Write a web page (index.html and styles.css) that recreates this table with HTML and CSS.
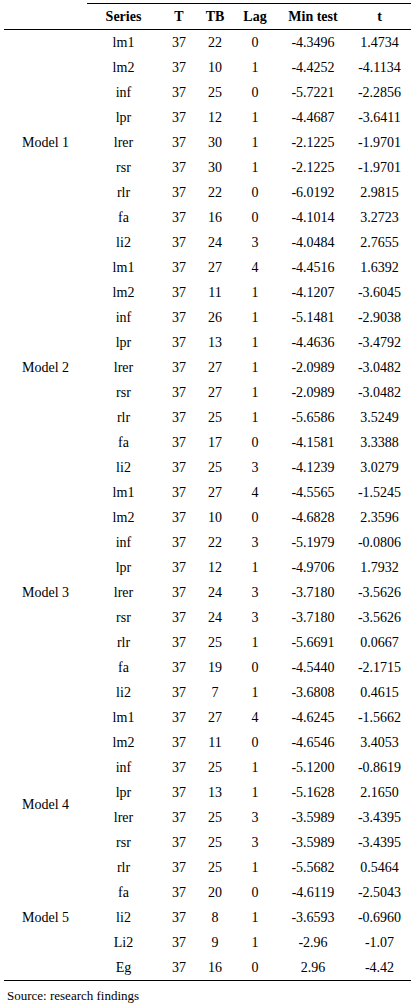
FILE: index.html
```html
<!DOCTYPE html>
<html>
<head>
<meta charset="utf-8">
<link rel="stylesheet" href="styles.css">
</head>
<body>
<div class="page">
<table class="tbl">
<colgroup>
<col class="c-model"><col class="c-series"><col class="c-t"><col class="c-tb"><col class="c-lag"><col class="c-min"><col class="c-tt">
</colgroup>
<thead>
<tr class="head">
<th class="blank"></th><th>Series</th><th>T</th><th>TB</th><th>Lag</th><th>Min test</th><th>t</th>
</tr>
</thead>
<tbody>
<tr><td class="model" rowspan="9">Model 1</td><td>lm1</td><td>37</td><td>22</td><td>0</td><td>-4.3496</td><td>1.4734</td></tr>
<tr><td>lm2</td><td>37</td><td>10</td><td>1</td><td>-4.4252</td><td>-4.1134</td></tr>
<tr><td>inf</td><td>37</td><td>25</td><td>0</td><td>-5.7221</td><td>-2.2856</td></tr>
<tr><td>lpr</td><td>37</td><td>12</td><td>1</td><td>-4.4687</td><td>-3.6411</td></tr>
<tr><td>lrer</td><td>37</td><td>30</td><td>1</td><td>-2.1225</td><td>-1.9701</td></tr>
<tr><td>rsr</td><td>37</td><td>30</td><td>1</td><td>-2.1225</td><td>-1.9701</td></tr>
<tr><td>rlr</td><td>37</td><td>22</td><td>0</td><td>-6.0192</td><td>2.9815</td></tr>
<tr><td>fa</td><td>37</td><td>16</td><td>0</td><td>-4.1014</td><td>3.2723</td></tr>
<tr><td>li2</td><td>37</td><td>24</td><td>3</td><td>-4.0484</td><td>2.7655</td></tr>

<tr><td class="model" rowspan="9">Model 2</td><td>lm1</td><td>37</td><td>27</td><td>4</td><td>-4.4516</td><td>1.6392</td></tr>
<tr><td>lm2</td><td>37</td><td>11</td><td>1</td><td>-4.1207</td><td>-3.6045</td></tr>
<tr><td>inf</td><td>37</td><td>26</td><td>1</td><td>-5.1481</td><td>-2.9038</td></tr>
<tr><td>lpr</td><td>37</td><td>13</td><td>1</td><td>-4.4636</td><td>-3.4792</td></tr>
<tr><td>lrer</td><td>37</td><td>27</td><td>1</td><td>-2.0989</td><td>-3.0482</td></tr>
<tr><td>rsr</td><td>37</td><td>27</td><td>1</td><td>-2.0989</td><td>-3.0482</td></tr>
<tr><td>rlr</td><td>37</td><td>25</td><td>1</td><td>-5.6586</td><td>3.5249</td></tr>
<tr><td>fa</td><td>37</td><td>17</td><td>0</td><td>-4.1581</td><td>3.3388</td></tr>
<tr><td>li2</td><td>37</td><td>25</td><td>3</td><td>-4.1239</td><td>3.0279</td></tr>

<tr><td class="model" rowspan="9">Model 3</td><td>lm1</td><td>37</td><td>27</td><td>4</td><td>-4.5565</td><td>-1.5245</td></tr>
<tr><td>lm2</td><td>37</td><td>10</td><td>0</td><td>-4.6828</td><td>2.3596</td></tr>
<tr><td>inf</td><td>37</td><td>22</td><td>3</td><td>-5.1979</td><td>-0.0806</td></tr>
<tr><td>lpr</td><td>37</td><td>12</td><td>1</td><td>-4.9706</td><td>1.7932</td></tr>
<tr><td>lrer</td><td>37</td><td>24</td><td>3</td><td>-3.7180</td><td>-3.5626</td></tr>
<tr><td>rsr</td><td>37</td><td>24</td><td>3</td><td>-3.7180</td><td>-3.5626</td></tr>
<tr><td>rlr</td><td>37</td><td>25</td><td>1</td><td>-5.6691</td><td>0.0667</td></tr>
<tr><td>fa</td><td>37</td><td>19</td><td>0</td><td>-4.5440</td><td>-2.1715</td></tr>
<tr><td>li2</td><td>37</td><td>7</td><td>1</td><td>-3.6808</td><td>0.4615</td></tr>

<tr><td class="model" rowspan="8">Model 4</td><td>lm1</td><td>37</td><td>27</td><td>4</td><td>-4.6245</td><td>-1.5662</td></tr>
<tr><td>lm2</td><td>37</td><td>11</td><td>0</td><td>-4.6546</td><td>3.4053</td></tr>
<tr><td>inf</td><td>37</td><td>25</td><td>1</td><td>-5.1200</td><td>-0.8619</td></tr>
<tr><td>lpr</td><td>37</td><td>13</td><td>1</td><td>-5.1628</td><td>2.1650</td></tr>
<tr><td>lrer</td><td>37</td><td>25</td><td>3</td><td>-3.5989</td><td>-3.4395</td></tr>
<tr><td>rsr</td><td>37</td><td>25</td><td>3</td><td>-3.5989</td><td>-3.4395</td></tr>
<tr><td>rlr</td><td>37</td><td>25</td><td>1</td><td>-5.5682</td><td>0.5464</td></tr>
<tr><td>fa</td><td>37</td><td>20</td><td>0</td><td>-4.6119</td><td>-2.5043</td></tr>

<tr><td class="model">Model 5</td><td>li2</td><td>37</td><td>8</td><td>1</td><td>-3.6593</td><td>-0.6960</td></tr>
<tr><td class="model"></td><td>Li2</td><td>37</td><td>9</td><td>1</td><td>-2.96</td><td>-1.07</td></tr>
<tr class="last"><td class="model"></td><td>Eg</td><td>37</td><td>16</td><td>0</td><td>2.96</td><td>-4.42</td></tr>
</tbody>
</table>
<p class="source">Source: research findings</p>
</div>
</body>
</html>
```

FILE: styles.css
```css
html, body {
  margin: 0;
  padding: 0;
  background: #ffffff;
}

body,
.page,
.tbl,
.tbl th,
.tbl td,
.source {
  font-family: "Liberation Serif", "Times New Roman", serif;
}

.page {
  padding: 3px 0 0 4px;
  color: #000000;
}

.tbl {
  border-collapse: separate;
  border-spacing: 0;
  table-layout: fixed;
  width: 407px;
  font-size: 14px;
}

.c-model { width: 83px; }
.c-series { width: 73px; }
.c-t { width: 38px; }
.c-tb { width: 34px; }
.c-lag { width: 46px; }
.c-min { width: 70px; }
.c-tt { width: 63px; }

.tbl th,
.tbl td {
  padding: 0;
  text-align: center;
  vertical-align: middle;
  white-space: nowrap;
}

.head th {
  height: 25px;
  font-weight: bold;
  border-top: 1px solid #000;
  border-bottom: 1px solid #000;
}

.head th.blank {
  border-top: none;
}

.tbl tbody td {
  height: 25px;
}

.tbl tr.last td {
  border-bottom: 1px solid #000;
}

.source {
  margin: 0;
  padding: 6px 0 0 3px;
  font-size: 13px;
  line-height: 18px;
}
```
